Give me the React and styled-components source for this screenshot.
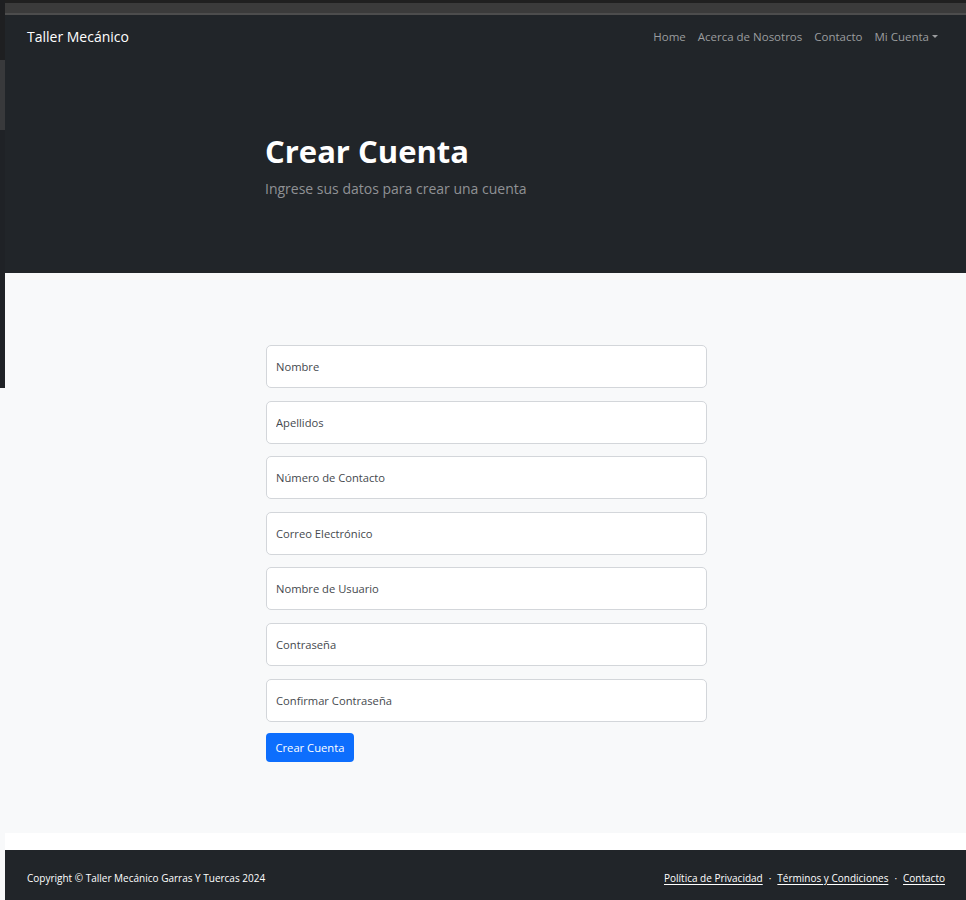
import React from "react";
import styled, { createGlobalStyle } from "styled-components";

const Global = createGlobalStyle`
  html, body { margin: 0; padding: 0; background: #f8f9fa; }
  body { font-family: "Open Sans", "Noto Sans", Arial, sans-serif; color: #212529; }
  * { box-sizing: border-box; }
`;

const Page = styled.div`
  display: flex;
  width: 966px;
  min-height: 900px;
  overflow: hidden;
`;

const LeftStrip = styled.div`
  width: 5px;
  flex: none;
  display: flex;
  flex-direction: column;
`;

const StripPart = styled.div`
  height: ${(p) => p.$h}px;
  background: ${(p) => p.$c};
  flex: ${(p) => (p.$grow ? "1" : "none")};
`;

const Main = styled.div`
  flex: 1;
  display: flex;
  flex-direction: column;
  min-width: 0;
`;

const ChromeBar = styled.div`
  height: ${(p) => p.$h}px;
  background: ${(p) => p.$c};
`;

const Header = styled.header`
  background: #212529;
`;

const Navbar = styled.nav`
  height: 42px;
  display: flex;
  align-items: center;
  justify-content: space-between;
  padding: 0 28px 0 22px;
`;

const Brand = styled.a`
  color: #fff;
  font-size: 14px;
  text-decoration: none;
  padding-top: 1px;
`;

const NavList = styled.ul`
  display: flex;
  list-style: none;
  margin: 0;
  padding: 0 0 2px;
  gap: 12px;
`;

const NavLink = styled.a`
  color: #9b9d9f;
  font-size: 11.5px;
  text-decoration: none;
  display: inline-flex;
  align-items: center;
`;

const Caret = styled.span`
  display: inline-block;
  margin-left: 3px;
  border-top: 3.5px solid #9b9d9f;
  border-left: 3px solid transparent;
  border-right: 3px solid transparent;
`;

const Hero = styled.div`
  width: 441px;
  margin: 0 0 0 260px;
  padding: 76px 0 74px;
`;

const Title = styled.h1`
  margin: 0 0 8px;
  color: #fff;
  font-size: 31px;
  font-weight: 700;
  line-height: 37px;
`;

const Lead = styled.p`
  margin: 0;
  color: #909295;
  font-size: 14px;
  line-height: 21px;
`;

const FormSection = styled.section`
  background: #f8f9fa;
  padding: 72px 0 71px;
`;

const Form = styled.form`
  width: 441px;
  margin: 0 0 0 261px;
  display: flex;
  flex-direction: column;
  align-items: flex-start;
  gap: 12.6px;
`;

const Input = styled.input`
  width: 100%;
  height: 43px;
  border: 1px solid #d3d6da;
  border-radius: 5px;
  background: #fff;
  padding: 0 9px;
  font-family: inherit;
  font-size: 11.2px;
  color: #212529;
  outline: none;
  &::placeholder { color: #45494e; opacity: 1; }
`;

const Button = styled.button`
  height: 29px;
  padding: 0 9.5px;
  border: none;
  border-radius: 4px;
  background: #0d6efd;
  color: #fff;
  font-family: inherit;
  font-size: 11.2px;
  margin-top: -1px;
  cursor: pointer;
`;

const Spacer = styled.div`
  height: 17px;
  background: #fff;
`;

const Footer = styled.footer`
  height: 50px;
  background: #212529;
  display: flex;
  align-items: center;
  justify-content: space-between;
  padding: 5px 21px 0 22px;
  font-size: 10px;
  color: #fff;
`;

const FooterLinks = styled.div`
  display: flex;
  align-items: center;
  gap: 6px;
`;

const FooterLink = styled.a`
  color: #fff;
  text-decoration: underline;
  text-underline-offset: 2px;
`;

const Dot = styled.span`
  color: #fff;
`;

const fields = [
  "Nombre",
  "Apellidos",
  "Número de Contacto",
  "Correo Electrónico",
  "Nombre de Usuario",
  "Contraseña",
  "Confirmar Contraseña",
];

export default function App() {
  return (
    <>
      <Global />
      <Page>
        <LeftStrip>
          <StripPart $h={60} $c="#1e1f21" />
          <StripPart $h={70} $c="#38393b" />
          <StripPart $h={258} $c="#1f2226" />
          <StripPart $grow $c="#f8f9fa" />
        </LeftStrip>
        <Main>
          <ChromeBar $h={3} $c="#202020" />
          <ChromeBar $h={10} $c="#3b3b3b" />
          <ChromeBar $h={2} $c="#4d4d4d" />
          <Header>
            <Navbar>
              <Brand href="#">Taller Mecánico</Brand>
              <NavList>
                <li><NavLink href="#">Home</NavLink></li>
                <li><NavLink href="#">Acerca de Nosotros</NavLink></li>
                <li><NavLink href="#">Contacto</NavLink></li>
                <li><NavLink href="#">Mi Cuenta<Caret /></NavLink></li>
              </NavList>
            </Navbar>
            <Hero>
              <Title>Crear Cuenta</Title>
              <Lead>Ingrese sus datos para crear una cuenta</Lead>
            </Hero>
          </Header>
          <FormSection>
            <Form onSubmit={(e) => e.preventDefault()}>
              {fields.map((f) => (
                <Input key={f} placeholder={f} type={f.startsWith("Contr") || f.startsWith("Confirmar") ? "password" : "text"} />
              ))}
              <Button type="submit">Crear Cuenta</Button>
            </Form>
          </FormSection>
          <Spacer />
          <Footer>
            <span>Copyright © Taller Mecánico Garras Y Tuercas 2024</span>
            <FooterLinks>
              <FooterLink href="#">Política de Privacidad</FooterLink>
              <Dot>·</Dot>
              <FooterLink href="#">Términos y Condiciones</FooterLink>
              <Dot>·</Dot>
              <FooterLink href="#">Contacto</FooterLink>
            </FooterLinks>
          </Footer>
        </Main>
      </Page>
    </>
  );
}
